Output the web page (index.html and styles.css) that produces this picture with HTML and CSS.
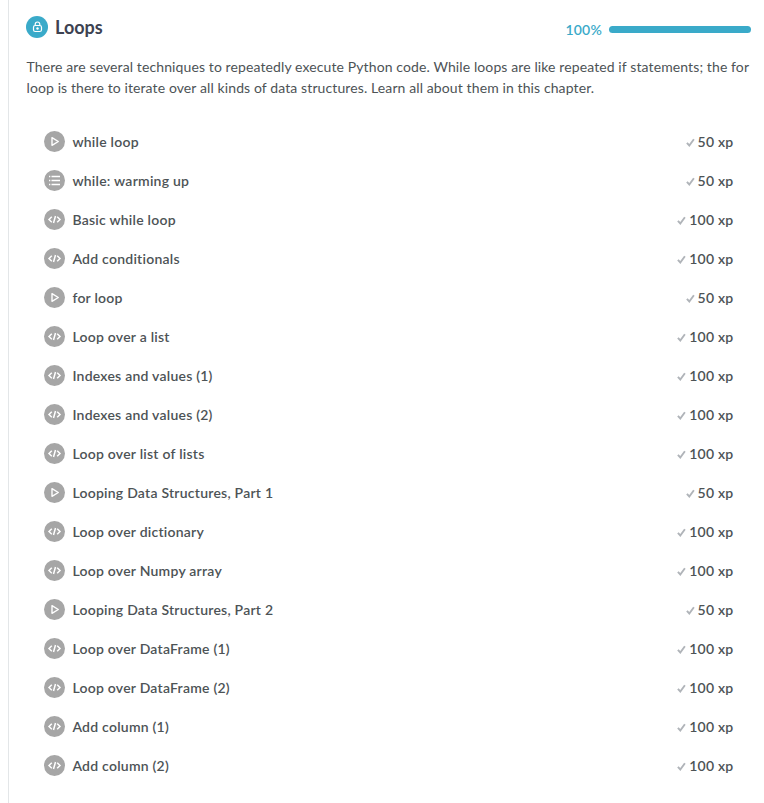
FILE: index.html
```html
<!DOCTYPE html>
<html lang="en">
<head>
<meta charset="utf-8">
<title>Loops</title>
<link rel="stylesheet" href="styles.css">
</head>
<body>
<svg class="defs" aria-hidden="true">
<symbol id="video" viewBox="0 0 21 21"><path d="M8 6.700v7.600l6.300-3.800z" fill="none" stroke="#fff" stroke-width="1.400" stroke-linejoin="round"/></symbol>
<symbol id="list" viewBox="0 0 21 21"><path d="M7.500 6.500h8.500M7.500 10.500h8.500M7.500 14.500h8.500M5 6.500h1.300M5 10.500h1.300M5 14.500h1.300" fill="none" stroke="#fff" stroke-width="1.300"/></symbol>
<symbol id="code" viewBox="0 0 21 21"><path d="M7.800 7.700 5 10.500l2.800 2.800M13.200 7.700l2.800 2.800-2.800 2.800M11.500 7l-2 7" fill="none" stroke="#fff" stroke-width="1.500"/></symbol>
<symbol id="check" viewBox="0 0 9 9"><path d="M.9 4.900 3.300 7.500 7.900 1.200" fill="none" stroke="#b0b4b9" stroke-width="1.900"/></symbol>
</svg>
<main class="chapter">
<header class="header">
<span class="badge"><svg width="22" height="22" viewBox="0 0 22 22"><rect x="7.500" y="9.500" width="8" height="6" rx="1.800" fill="none" stroke="#fff" stroke-width="1.200"/><path d="M9.200 9.500V8.300a2.300 2.300 0 0 1 4.600 0v1.200" fill="none" stroke="#fff" stroke-width="1.200"/><circle cx="11.500" cy="12.500" r="1.200" fill="#fff"/></svg></span>
<h1>Loops</h1>
<span class="percent">100%</span><span class="bar"></span>
</header>
<p>There are several techniques to repeatedly execute Python code. While loops are like repeated if statements; the for<br>loop is there to iterate over all kinds of data structures. Learn all about them in this chapter.</p>
<ul id="exercises"></ul>
</main>
<script src="script.js"></script>
</body>
</html>
```
FILE: styles.css
```css
body { margin: 0; background: #fff; color: #4d5356; font-family: Lato, sans-serif; }
.defs { position: absolute; width: 0; height: 0; }
.chapter { box-sizing: border-box; margin-left: 8px; height: 803px; border-left: 1px solid #e3e6e8; padding: 16px 13px 0 17px; overflow: hidden; }
.header { display: flex; align-items: flex-start; height: 23px; }
.badge { width: 22px; height: 22px; border-radius: 50%; background: #3aaac9; }
.badge svg { display: block; }
h1 { margin: 0 auto 0 7px; font-size: 18px; line-height: 23px; font-weight: 700; color: #3d4251; }
.percent { color: #3aaac9; font-size: 14px; line-height: 17px; font-weight: 600; letter-spacing: 0.2px; margin: 5px 7px 0 0; }
.bar { width: 142px; height: 7px; margin-top: 10px; border-radius: 4px; background: #3aaac9; }
p { margin: 17px 0 0; padding-left: 0.5px; font-size: 14px; line-height: 21px; letter-spacing: 0.108px; white-space: nowrap; }
ul { list-style: none; margin: 24px 17.500px 0 18px; padding: 0; }
li { display: flex; align-items: center; height: 39px; font-size: 14px; line-height: 17px; font-weight: 600; letter-spacing: 0.240px; }
.icon { width: 21px; height: 21px; border-radius: 50%; background: #a6a6a6; margin-right: 7.400px; }
.name { margin-right: auto; }
.check { width: 9px; height: 9px; margin: 1px 3px 0 0; }
```
FILE: script.js
```js
const exercises = [
  ["video", "while loop", 50],
  ["list", "while: warming up", 50],
  ["code", "Basic while loop", 100],
  ["code", "Add conditionals", 100],
  ["video", "for loop", 50],
  ["code", "Loop over a list", 100],
  ["code", "Indexes and values (1)", 100],
  ["code", "Indexes and values (2)", 100],
  ["code", "Loop over list of lists", 100],
  ["video", "Looping Data Structures, Part 1", 50],
  ["code", "Loop over dictionary", 100],
  ["code", "Loop over Numpy array", 100],
  ["video", "Looping Data Structures, Part 2", 50],
  ["code", "Loop over DataFrame (1)", 100],
  ["code", "Loop over DataFrame (2)", 100],
  ["code", "Add column (1)", 100],
  ["code", "Add column (2)", 100],
];
document.getElementById("exercises").innerHTML = exercises.map(([icon, name, xp]) =>
  `<li><svg class="icon"><use href="#${icon}"/></svg><span class="name">${name}</span><svg class="check"><use href="#check"/></svg><span>${xp} xp</span></li>`
).join("");
```
